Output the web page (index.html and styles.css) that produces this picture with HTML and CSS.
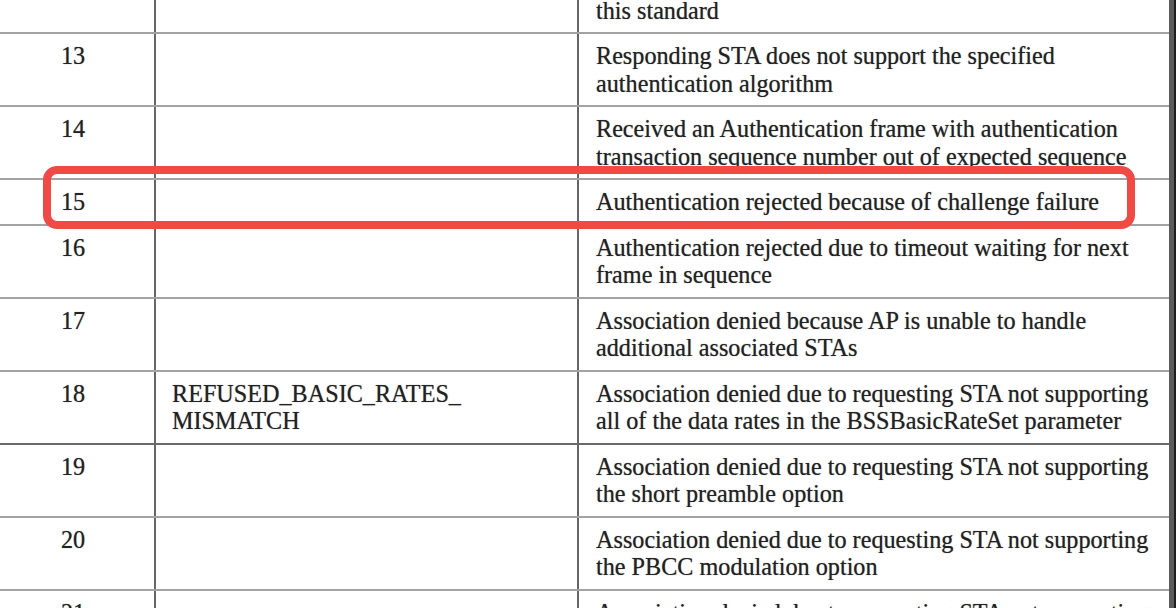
FILE: index.html
```html
<!DOCTYPE html>
<html>
<head>
<meta charset="utf-8">
<link rel="stylesheet" href="styles.css">
</head>
<body>
<div class="page">
  <table class="codes">
    <colgroup>
      <col class="c-num">
      <col class="c-name">
      <col class="c-desc">
    </colgroup>
    <tbody>
      <tr><td class="num">12</td><td class="name"></td><td class="desc">Association denied due to reason outside the scope of<br>this standard</td></tr>
      <tr><td class="num">13</td><td class="name"></td><td class="desc">Responding STA does not support the specified<br>authentication algorithm</td></tr>
      <tr><td class="num">14</td><td class="name"></td><td class="desc">Received an Authentication frame with authentication<br>transaction sequence number out of expected sequence</td></tr>
      <tr><td class="num">15</td><td class="name"></td><td class="desc">Authentication rejected because of challenge failure</td></tr>
      <tr><td class="num">16</td><td class="name"></td><td class="desc">Authentication rejected due to timeout waiting for next<br>frame in sequence</td></tr>
      <tr><td class="num">17</td><td class="name"></td><td class="desc">Association denied because AP is unable to handle<br>additional associated STAs</td></tr>
      <tr class="dark"><td class="num">18</td><td class="name">REFUSED_BASIC_RATES_<br>MISMATCH</td><td class="desc">Association denied due to requesting STA not supporting<br>all of the data rates in the BSSBasicRateSet parameter</td></tr>
      <tr><td class="num">19</td><td class="name"></td><td class="desc">Association denied due to requesting STA not supporting<br>the short preamble option</td></tr>
      <tr><td class="num">20</td><td class="name"></td><td class="desc">Association denied due to requesting STA not supporting<br>the PBCC modulation option</td></tr>
      <tr><td class="num">21</td><td class="name"></td><td class="desc">Association denied due to requesting STA not supporting<br>the Channel Agility option</td></tr>
    </tbody>
  </table>
  <div class="highlight"></div>
</div>
</body>
</html>
```
FILE: styles.css
```css
html, body {
  margin: 0;
  padding: 0;
  height: 100%;
  overflow: hidden;
  background: #1f1f1f;
}

.page {
  position: relative;
  width: 1169px;
  height: 608px;
  background: #ffffff;
  border-right: 5px solid #5b5b5b;
  overflow: hidden;
}

.codes {
  margin-top: -39px;
  width: 1169px;
  border-collapse: collapse;
  table-layout: fixed;
  font-family: "Liberation Serif", "Times New Roman", serif;
  font-size: 24.2px;
  line-height: 27.5px;
  color: #222222;
  text-shadow: 0 0 1px rgba(30, 30, 30, 0.55);
}

.c-num { width: 155px; }
.c-name { width: 423px; }
.c-desc { width: auto; }

.codes td {
  vertical-align: top;
  padding: 8px 0 8px 0;
  border-bottom: 2px solid #a3a3a3;
  white-space: nowrap;
}

.codes tr.dark td {
  border-bottom-color: #6a6a6a;
}

.codes td.num {
  text-align: center;
  padding-right: 8px;
  border-right: 2px solid #666666;
}

.codes td.name {
  padding-left: 16px;
  border-right: 2px solid #666666;
}

.codes td.desc {
  padding-left: 17px;
}

.highlight {
  position: absolute;
  left: 43px;
  top: 166px;
  width: 1092px;
  height: 63px;
  box-sizing: border-box;
  border: 8px solid #ef4a46;
  border-radius: 14px;
}
```
